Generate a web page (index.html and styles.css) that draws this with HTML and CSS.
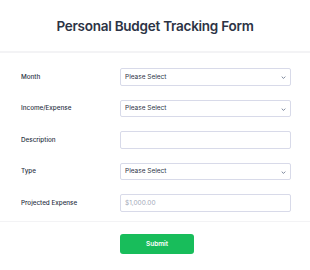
FILE: index.html
```html
<!DOCTYPE html>
<html lang="en">

<head>
    <meta charset="UTF-8">
    <meta name="viewport" content="width=device-width, initial-scale=1.0">
    <title>Personal Budget Tracking Form</title>
    <link rel="stylesheet" href="styles.css">
</head>

<body>

    <div class="header">
        <h1>Personal Budget Tracking Form</h1>
    </div>

    <form class="form" id="budgetForm">
        <div class="fields">
            <div class="form-row">
                <label for="month">Month</label>
                <div class="select-wrap">
                    <select id="month" name="month">
                        <option>Please Select</option>
                    </select>
                    <svg class="chevron" viewBox="0 0 8 5" width="5" height="3"><path d="M1 1l3 3 3-3" fill="none" stroke="#57647e" stroke-width="1.3"/></svg>
                </div>
            </div>
            <div class="form-row">
                <label for="incomeExpense">Income/Expense</label>
                <div class="select-wrap">
                    <select id="incomeExpense" name="incomeExpense">
                        <option>Please Select</option>
                    </select>
                    <svg class="chevron" viewBox="0 0 8 5" width="5" height="3"><path d="M1 1l3 3 3-3" fill="none" stroke="#57647e" stroke-width="1.3"/></svg>
                </div>
            </div>
            <div class="form-row">
                <label for="description">Description</label>
                <input type="text" id="description" name="description">
            </div>
            <div class="form-row">
                <label for="type">Type</label>
                <div class="select-wrap">
                    <select id="type" name="type">
                        <option>Please Select</option>
                    </select>
                    <svg class="chevron" viewBox="0 0 8 5" width="5" height="3"><path d="M1 1l3 3 3-3" fill="none" stroke="#57647e" stroke-width="1.3"/></svg>
                </div>
            </div>
            <div class="form-row">
                <label for="projected">Projected Expense</label>
                <input type="text" id="projected" name="projected" placeholder="$1,000.00">
            </div>
        </div>

        <div class="footer">
            <button type="submit">Submit</button>
        </div>
    </form>

</body>

</html>
```

FILE: styles.css
```css
body {
    font-family: Inter, 'Noto Sans', sans-serif;
    background-color: #fff;
    margin: 0;
    padding: 0;
}

.header {
    height: 51px;
    display: flex;
    align-items: center;
    justify-content: center;
    border-bottom: 2px solid #f3f3f5;
}

h1 {
    margin: 0;
    font-size: 13.5px;
    font-weight: 600;
    letter-spacing: -0.25px;
    color: #2c3345;
}

.form {
    padding: 15px 19px 0 21px;
}

.fields {
    display: flex;
    flex-direction: column;
    gap: 14px;
}

.form-row {
    display: flex;
    align-items: center;
    height: 17.5px;
}

label {
    width: 99px;
    font-size: 6.3px;
    font-weight: 500;
    color: #2c3345;
}

.select-wrap {
    position: relative;
    flex: 1;
    height: 17.5px;
}

select,
input[type="text"] {
    display: block;
    flex: 1;
    width: 100%;
    height: 17.5px;
    margin: 0;
    padding: 0 4px;
    border: 1px solid #d8dae9;
    border-radius: 2px;
    background-color: #fff;
    font-family: inherit;
    font-size: 6.5px;
    color: #2c3345;
    box-sizing: border-box;
    appearance: none;
    outline: none;
}

input::placeholder {
    color: #a3a8b8;
}

.chevron {
    position: absolute;
    right: 5px;
    top: 8px;
}

.footer {
    margin-top: 9.5px;
    margin-left: -21px;
    margin-right: -19px;
    border-top: 1px solid #f3f3f5;
    padding: 12px 0 0 120px;
}

button {
    display: block;
    width: 74px;
    height: 20px;
    background-color: #18bd5b;
    border: none;
    border-radius: 3px;
    color: #fff;
    font-family: inherit;
    font-size: 6.5px;
    font-weight: 600;
    cursor: pointer;
}
```
